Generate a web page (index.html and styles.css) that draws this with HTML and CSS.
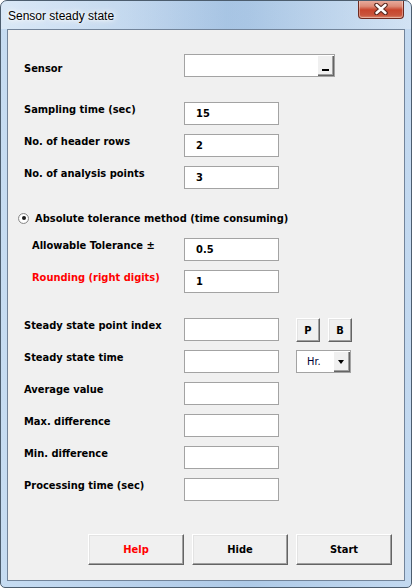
FILE: index.html
```html
<!DOCTYPE html>
<html lang="en">
<head>
<meta charset="utf-8">
<title>Sensor steady state</title>
<link rel="stylesheet" href="styles.css">
</head>
<body>
<div class="window">
  <header class="titlebar">
    <span class="title">Sensor steady state</span>
    <span class="close" aria-label="Close">
      <svg width="14" height="12" viewBox="0 0 14 12">
        <path d="M2.5 2 L11.5 10 M11.5 2 L2.5 10" stroke="#5a2a22" stroke-width="4.6" stroke-linecap="round" fill="none"/>
        <path d="M2.5 2 L11.5 10 M11.5 2 L2.5 10" stroke="#ffffff" stroke-width="2.4" stroke-linecap="round" fill="none"/>
      </svg>
    </span>
  </header>
  <main class="client">
    <section class="form">
      <div class="row r-sensor">
        <span class="label label-low">Sensor</span>
        <div class="combo combo-sensor"><span class="combo-btn"><i class="dash"></i></span></div>
      </div>
      <div class="row r-first">
        <span class="label">Sampling time (sec)</span>
        <div class="field">15</div>
      </div>
      <div class="row">
        <span class="label">No. of header rows</span>
        <div class="field">2</div>
      </div>
      <div class="row">
        <span class="label">No. of analysis points</span>
        <div class="field">3</div>
      </div>
      <div class="radio-row">
        <span class="radio"></span>
        <span class="radio-text">Absolute tolerance method (time consuming)</span>
      </div>
      <div class="row r-tol">
        <span class="label indent">Allowable Tolerance ±</span>
        <div class="field">0.5</div>
      </div>
      <div class="row">
        <span class="label indent red">Rounding (right digits)</span>
        <div class="field">1</div>
      </div>
      <div class="row r-section">
        <span class="label">Steady state point index</span>
        <div class="field"></div>
        <span class="btn btn-sq first-extra">P</span>
        <span class="btn btn-sq">B</span>
      </div>
      <div class="row">
        <span class="label">Steady state time</span>
        <div class="field"></div>
        <div class="combo combo-unit first-extra"><span class="unit-text">Hr.</span><span class="combo-btn"><i class="tri"></i></span></div>
      </div>
      <div class="row">
        <span class="label">Average value</span>
        <div class="field"></div>
      </div>
      <div class="row">
        <span class="label">Max. difference</span>
        <div class="field"></div>
      </div>
      <div class="row">
        <span class="label">Min. difference</span>
        <div class="field"></div>
      </div>
      <div class="row">
        <span class="label">Processing time (sec)</span>
        <div class="field"></div>
      </div>
    </section>
    <footer class="actions">
      <span class="btn btn-wide red">Help</span>
      <span class="btn btn-wide">Hide</span>
      <span class="btn btn-wide">Start</span>
    </footer>
  </main>
</div>
</body>
</html>
```
FILE: styles.css
```css
* { box-sizing: border-box; }

html, body {
  margin: 0;
  padding: 0;
  background: #ffffff;
}

.window {
  width: 412px;
  height: 588px;
  border: 1px solid #4c5d6e;
  border-radius: 7px 7px 5px 5px;
  background: linear-gradient(90deg, #c6dcf2 0%, #b6cfea 40%, #aecae7 60%, #c3d9f0 100%);
  padding: 0 6px 6px 6px;
  display: flex;
  flex-direction: column;
  overflow: hidden;
}

.titlebar {
  height: 28px;
  display: flex;
  justify-content: space-between;
  align-items: flex-start;
  background: linear-gradient(90deg, rgba(255,255,255,0.35) 0%, rgba(255,255,255,0.15) 30%, rgba(120,160,205,0.15) 55%, rgba(255,255,255,0.25) 100%);
  margin: 0 -6px;
  padding-left: 7px;
  padding-right: 7px;
}

.title {
  font-family: "Liberation Sans", Arial, sans-serif;
  font-size: 12px;
  line-height: 14px;
  padding-top: 8px;
  color: #000000;
  text-shadow: 0 0 6px #ffffff, 0 0 10px #ffffff, 0 0 3px #ffffff;
}

.close {
  width: 46px;
  height: 19px;
  margin-top: -1px;
  border: 1px solid #6e2a20;
  border-top: none;
  border-radius: 0 0 4px 4px;
  background: linear-gradient(180deg, #eab0a2 0%, #dd8a76 35%, #c8452d 55%, #c9553d 85%, #dc8b70 100%);
  box-shadow: inset 0 0 0 1px rgba(255,255,255,0.35);
  display: flex;
  align-items: center;
  justify-content: center;
}

.close svg { display: block; }

.client {
  flex: 1;
  border: 1px solid #72849a;
  background: #f0f0f0;
  display: flex;
  flex-direction: column;
  font-family: "DejaVu Sans Condensed", "DejaVu Sans", sans-serif;
  font-stretch: condensed;
  font-size: 11px;
  font-weight: bold;
  color: #000000;
}

.form {
  display: flex;
  flex-direction: column;
  padding-left: 16px;
}

.row {
  display: flex;
  align-items: flex-start;
  height: 23px;
  margin-top: 9px;
}

.r-sensor { margin-top: 24px; }
.r-first { margin-top: 25px; }
.r-tol { margin-top: 12px; }
.r-section { margin-top: 25px; }

.label {
  width: 160px;
  flex: none;
  line-height: 13px;
  padding-top: 1px;
  white-space: nowrap;
}

.label-low { padding-top: 8px; }
.label.indent { padding-left: 8px; }
.red { color: #ff0000; }

.field {
  width: 95px;
  height: 23px;
  flex: none;
  background: #ffffff;
  border: 1px solid #a3a3a3;
  line-height: 21px;
  padding-left: 11px;
}

.combo {
  height: 23px;
  flex: none;
  background: #ffffff;
  border: 1px solid #a3a3a3;
  display: flex;
  justify-content: flex-end;
  align-items: stretch;
}

.combo-sensor { width: 151px; }

.combo-unit {
  width: 55px;
  justify-content: space-between;
}

.first-extra { margin-left: 17px; }

.unit-text {
  font-weight: normal;
  color: #000033;
  line-height: 21px;
  padding-left: 10px;
}

.combo-btn {
  width: 17px;
  background: #f0f0f0;
  box-shadow: inset 1px 1px 0 #ffffff, inset -1px -1px 0 #646464, inset -2px -2px 0 #a0a0a0;
  display: flex;
  justify-content: center;
  align-items: flex-end;
  padding-bottom: 5px;
}

.dash {
  display: block;
  width: 7px;
  height: 2px;
  background: #000000;
  margin-left: -1px;
}

.combo-unit .combo-btn {
  align-items: center;
  padding-bottom: 0;
  padding-top: 1px;
}

.tri {
  display: block;
  width: 0;
  height: 0;
  border-left: 3.5px solid transparent;
  border-right: 3.5px solid transparent;
  border-top: 4px solid #000000;
  margin-left: -1px;
}

.radio-row {
  display: flex;
  align-items: center;
  height: 16px;
  margin-top: 21px;
  margin-left: -6px;
}

.radio {
  width: 11px;
  height: 11px;
  border-radius: 50%;
  border: 1px solid #8a8a8a;
  background: radial-gradient(circle, #ffffff 55%, #dcdcdc 100%);
  display: flex;
  align-items: center;
  justify-content: center;
  flex: none;
}

.radio::after {
  content: "";
  width: 4px;
  height: 4px;
  border-radius: 50%;
  background: #1a1a1a;
}

.radio-text {
  margin-left: 6px;
  line-height: 13px;
  white-space: nowrap;
}

.btn {
  display: flex;
  align-items: center;
  justify-content: center;
  background: #f0f0f0;
  border: 1px solid;
  border-color: #ffffff #646464 #646464 #ffffff;
  box-shadow: inset -1px -1px 0 #a0a0a0, inset 1px 1px 0 #e3e3e3;
  flex: none;
  line-height: 13px;
}

.btn-sq {
  width: 24px;
  height: 24px;
  margin-left: 8px;
}

.btn-sq.first-extra { margin-left: 17px; }

.actions {
  display: flex;
  justify-content: flex-end;
  gap: 8px;
  margin-top: 33px;
  padding-right: 12px;
}

.btn-wide {
  width: 96px;
  height: 31px;
}
```
